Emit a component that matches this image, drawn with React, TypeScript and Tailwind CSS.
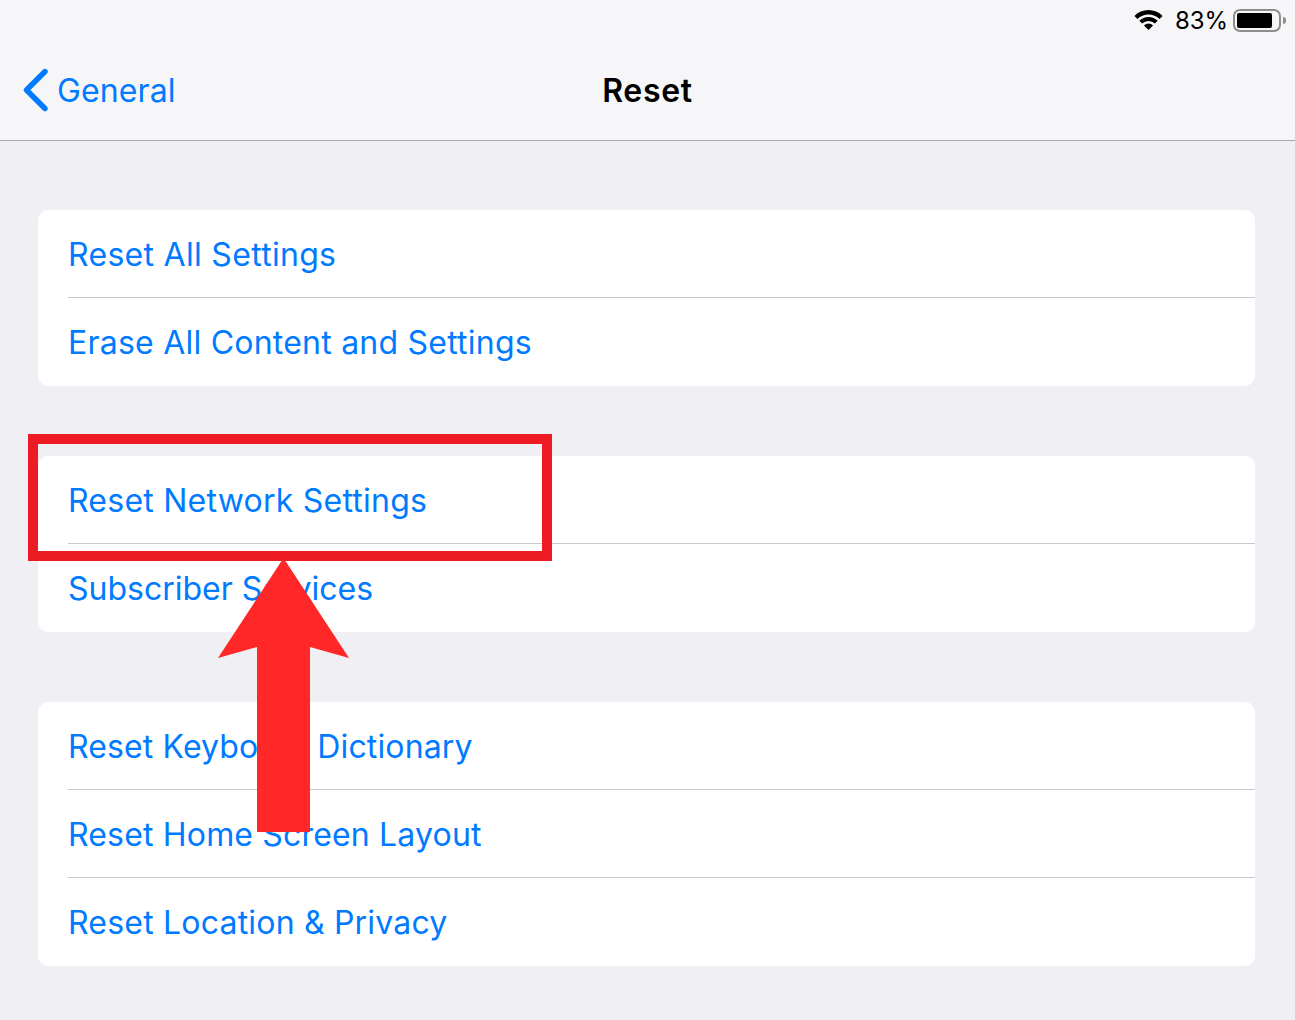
const font = "font-['Inter','Liberation_Sans',sans-serif]";

function Row({ label, track, divider }: { label: string; track: string; divider?: boolean }) {
  return (
    <div className="pl-[30px]">
      <div className={`h-[88px] flex items-center text-[32px] text-[#007aff] ${divider ? "border-b border-[#c8c7cc]" : ""}`}>
        <span className={`${divider ? "pt-[3px]" : "pt-[1px]"} ${track}`}>{label}</span>
      </div>
    </div>
  );
}

function Group({ items }: { items: [string, string][] }) {
  return (
    <div className="bg-white rounded-[10px] overflow-hidden">
      {items.map(([t, track], i) => (
        <Row key={t} label={t} track={track} divider={i < items.length - 1} />
      ))}
    </div>
  );
}

export default function App() {
  return (
    <div className={`${font} relative w-[1295px] h-[1020px] overflow-hidden bg-[#efeff4]`}>
      <header className="h-[141px] bg-[#f6f6f8] border-b border-[#a9a9ab] flex flex-col">
        <div className="h-[40px] flex items-center justify-end pr-[9px] gap-[12px]">
          <svg width="30" height="22" viewBox="0 0 30 22" className="-mr-[2px]">
            <path d="M14.5 21 L9.9 16.4 A6.5 6.5 0 0 1 19.1 16.4 Z" fill="#000" />
            <path d="M5.3 11.8 A13 13 0 0 1 23.7 11.8 L20.9 14.6 A9 9 0 0 0 8.1 14.6 Z" fill="#000" />
            <path d="M0.4 6.9 A20 20 0 0 1 28.6 6.9 L25.5 10 A15.5 15.5 0 0 0 3.5 10 Z" fill="#000" />
          </svg>
          <span className="text-[24px] leading-none text-black ml-[1px] -mr-[2px] pt-[1px] tracking-[-0.1px]">83%</span>
          <div className="flex items-center -ml-[5px]">
            <div className="w-[48px] h-[23px] rounded-[7px] border-2 border-[#8e8e8e] p-[2px]">
              <div className="w-[35px] h-full bg-black rounded-[2px]" />
            </div>
            <div className="w-[3px] h-[7px] ml-[2px] bg-[#8e8e8e] rounded-r-full" />
          </div>
        </div>
        <div className="relative flex-1 flex items-center justify-center">
          <div className="absolute left-[22px] top-[28px] flex items-center gap-[8px] text-[#007aff]">
            <svg width="27" height="44" viewBox="0 0 27 44">
              <path d="M23 3.5 L4.5 22 L23 40.5" fill="none" stroke="#007aff" strokeWidth="5.4" strokeLinecap="round" strokeLinejoin="round" />
            </svg>
            <span className="text-[32px] leading-none pt-[2px] tracking-[0.1px]">General</span>
          </div>
          <span className="text-[32px] font-semibold text-black leading-none pt-[1px] tracking-[0.7px]">Reset</span>
        </div>
      </header>

      <main className="pl-[38px] pr-[40px] pt-[69px] flex flex-col gap-[70px]">
        <Group items={[["Reset All Settings", "tracking-[0.3px]"], ["Erase All Content and Settings", "tracking-[0.23px]"]]} />
        <Group items={[["Reset Network Settings", "tracking-[0.24px]"], ["Subscriber Services", "tracking-[0px]"]]} />
        <Group items={[["Reset Keyboard Dictionary", "tracking-[0.13px]"], ["Reset Home Screen Layout", "tracking-[0.17px]"], ["Reset Location & Privacy", "tracking-[0.2px]"]]} />
      </main>

      <div className="absolute left-[28px] top-[434px] w-[524px] h-[127px] border-[10px] border-[#ed1c24]" />
      <svg className="absolute left-[210px] top-[550px]" width="150" height="290" viewBox="0 0 150 290">
        <path d="M73.5 8 L139 108 L100 97 L100 282 L47 282 L47 97 L8 108 Z" fill="#ff2727" />
      </svg>
    </div>
  );
}
